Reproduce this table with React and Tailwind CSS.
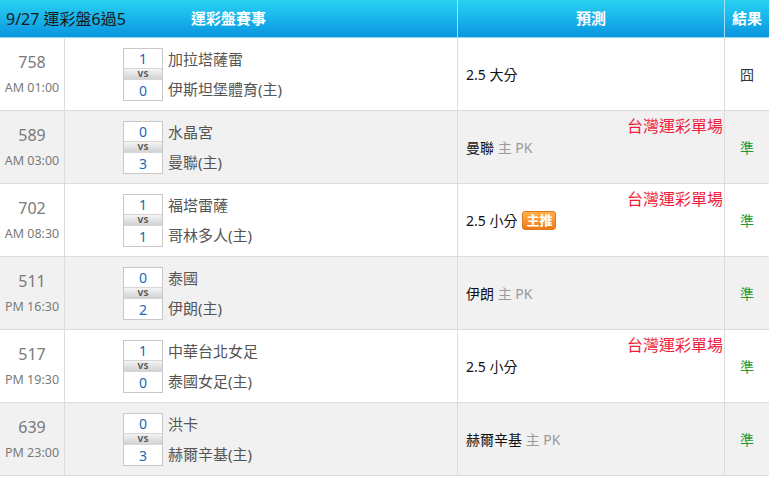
const rows = [
  { no: '758', time: 'AM 01:00', s1: '1', s2: '0', t1: '加拉塔薩雷', t2: '伊斯坦堡體育(主)', pick: '2.5 大分', result: '囧' },
  { no: '589', time: 'AM 03:00', s1: '0', s2: '3', t1: '水晶宮', t2: '曼聯(主)', team: '曼聯', tag: true, result: '準' },
  { no: '702', time: 'AM 08:30', s1: '1', s2: '1', t1: '福塔雷薩', t2: '哥林多人(主)', pick: '2.5 小分', hot: true, tag: true, result: '準' },
  { no: '511', time: 'PM 16:30', s1: '0', s2: '2', t1: '泰國', t2: '伊朗(主)', team: '伊朗', result: '準' },
  { no: '517', time: 'PM 19:30', s1: '1', s2: '0', t1: '中華台北女足', t2: '泰國女足(主)', pick: '2.5 小分', tag: true, result: '準' },
  { no: '639', time: 'PM 23:00', s1: '0', s2: '3', t1: '洪卡', t2: '赫爾辛基(主)', team: '赫爾辛基', result: '準' },
];

const font = "font-['Noto_Sans','Noto_Sans_CJK_TC',sans-serif]";

function ScoreBox({ s1, s2 }) {
  return (
    <div className="w-[40px] border border-[#c8c8c8] bg-white text-center">
      <div className="h-[20px] leading-[20px] text-[14px] text-[#1768b8] border-b border-[#d6d6d6]">{s1}</div>
      <div className="h-[10px] leading-[10px] text-[9px] font-bold text-[#555] bg-gradient-to-b from-[#f4f4f4] to-[#d2d2d2]">VS</div>
      <div className="h-[21px] leading-[21px] text-[14px] text-[#1768b8] border-t border-[#d6d6d6]">{s2}</div>
    </div>
  );
}

function Row({ r, alt }) {
  return (
    <div className={`grid grid-cols-[65px_393px_267px_1fr] h-[73px] border-b border-[#dcdcdc] ${alt ? 'bg-[#f1f1f1]' : 'bg-white'}`}>
      <div className="border-r border-[#dcdcdc] flex flex-col items-center justify-center">
        <div className="text-[16px] leading-[20px] text-[#7a7a7a]">{r.no}</div>
        <div className="mt-[8px] text-[12.5px] leading-[16px] text-[#7a7a7a]">{r.time}</div>
      </div>
      <div className="border-r border-[#dcdcdc] flex items-center pl-[58px]">
        <ScoreBox s1={r.s1} s2={r.s2} />
        <div className="ml-[5px] flex flex-col gap-[10px] text-[15px] leading-[20px] text-[#555]">
          <div>{r.t1}</div>
          <div>{r.t2}</div>
        </div>
      </div>
      <div className="relative border-r border-[#dcdcdc] flex items-center pl-[8px] text-[14px] text-[#111]">
        {r.tag && (
          <div className="absolute top-[5px] right-[1px] text-[16px] leading-[20px] text-[#f01e3c]">台灣運彩單場</div>
        )}
        {r.pick ? (
          <span>{r.pick}</span>
        ) : (
          <span>
            {r.team} <span className="text-[#9a9a9a]">主 PK</span>
          </span>
        )}
        {r.hot && (
          <span className="ml-[5px] px-[3px] h-[19px] leading-[17px] rounded-[3px] border border-[#e2761c] bg-gradient-to-b from-[#ffb24a] to-[#ef7a14] text-white text-[13px] font-bold">
            主推
          </span>
        )}
      </div>
      <div className={`flex items-center justify-center text-[14px] ${r.result === '準' ? 'text-[#1f9a34]' : 'text-[#333]'}`}>
        {r.result}
      </div>
    </div>
  );
}

export default function App() {
  return (
    <div className={`w-[769px] h-[477px] bg-white overflow-hidden ${font}`}>
      <div className="grid grid-cols-[458px_267px_1fr] h-[38px] bg-gradient-to-b from-[#2ad2f2] to-[#0a95e0] border-b border-[#8fdcf6]">
        <div className="grid grid-cols-[1fr_auto_1fr] items-center border-r border-[#9fe2f7]">
          <div className="pl-[6px] text-[16px] text-[#1a1a1a] whitespace-nowrap">9/27 運彩盤6過5</div>
          <div className="text-[15px] font-bold text-white">運彩盤賽事</div>
          <div />
        </div>
        <div className="flex items-center justify-center border-r border-[#9fe2f7] text-[15px] font-bold text-white">預測</div>
        <div className="flex items-center justify-center text-[15px] font-bold text-white">結果</div>
      </div>
      {rows.map((r, i) => (
        <Row key={r.no} r={r} alt={i % 2 === 1} />
      ))}
    </div>
  );
}
